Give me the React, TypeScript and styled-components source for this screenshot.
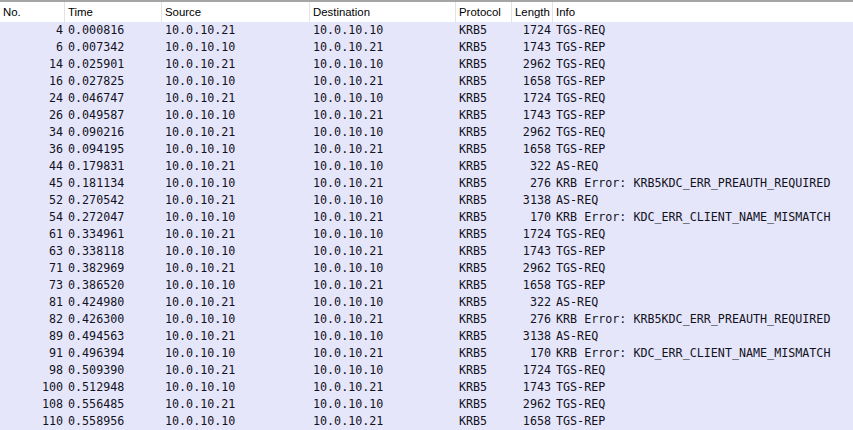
import React from "react";
import styled, { createGlobalStyle } from "styled-components";

const Global = createGlobalStyle`
  html, body { margin: 0; padding: 0; background: #ffffff; }
  body { width: 853px; height: 430px; overflow: hidden; }
`;

const COLS = "65px 97px 148px 146px 56px 41px 1fr";

const Table = styled.div`
  width: 853px;
  height: 430px;
  display: flex;
  flex-direction: column;
  overflow: hidden;
  border-top: 2px solid #a5a5a5;
  box-sizing: border-box;
`;

const Header = styled.div`
  display: grid;
  grid-template-columns: ${COLS};
  height: 21px;
  background: #ffffff;
  font-family: "Liberation Sans", "Noto Sans", sans-serif;
  font-size: 11.4px;
  color: #000;
`;

const HeadCell = styled.div<{ $last?: boolean }>`
  display: flex;
  align-items: center;
  padding-left: 3px;
  border-right: ${(p) => (p.$last ? "none" : "1px solid #e3e3e3")};
  white-space: nowrap;
  overflow: hidden;
`;

const Body = styled.div`
  flex: 1;
  border-left: 1px solid #9a9a9a;
  background: #e6e6fb;
`;

const Row = styled.div`
  display: grid;
  grid-template-columns: ${COLS};
  height: 17px;
  margin-left: -1px;
  background: #e6e6fb;
  font-family: "DejaVu Sans Mono", "Liberation Mono", monospace;
  font-size: 11.7px;
  color: #12121c;
  line-height: 17px;
`;

const Cell = styled.div<{ $right?: boolean; $pad?: number }>`
  white-space: pre;
  overflow: visible;
  text-align: ${(p) => (p.$right ? "right" : "left")};
  padding-left: ${(p) => (p.$right ? 0 : p.$pad ?? 3)}px;
  padding-right: ${(p) => (p.$right ? 2 : 0)}px;
`;

type Pkt = [number, string, string, string, string, number, string];

const A = "10.0.10.21";
const B = "10.0.10.10";
const PRE = "KRB Error: KRB5KDC_ERR_PREAUTH_REQUIRED";
const MIS = "KRB Error: KDC_ERR_CLIENT_NAME_MISMATCH";

const rows: Pkt[] = [
  [4, "0.000816", A, B, "KRB5", 1724, "TGS-REQ"],
  [6, "0.007342", B, A, "KRB5", 1743, "TGS-REP"],
  [14, "0.025901", A, B, "KRB5", 2962, "TGS-REQ"],
  [16, "0.027825", B, A, "KRB5", 1658, "TGS-REP"],
  [24, "0.046747", A, B, "KRB5", 1724, "TGS-REQ"],
  [26, "0.049587", B, A, "KRB5", 1743, "TGS-REP"],
  [34, "0.090216", A, B, "KRB5", 2962, "TGS-REQ"],
  [36, "0.094195", B, A, "KRB5", 1658, "TGS-REP"],
  [44, "0.179831", A, B, "KRB5", 322, "AS-REQ"],
  [45, "0.181134", B, A, "KRB5", 276, PRE],
  [52, "0.270542", A, B, "KRB5", 3138, "AS-REQ"],
  [54, "0.272047", B, A, "KRB5", 170, MIS],
  [61, "0.334961", A, B, "KRB5", 1724, "TGS-REQ"],
  [63, "0.338118", B, A, "KRB5", 1743, "TGS-REP"],
  [71, "0.382969", A, B, "KRB5", 2962, "TGS-REQ"],
  [73, "0.386520", B, A, "KRB5", 1658, "TGS-REP"],
  [81, "0.424980", A, B, "KRB5", 322, "AS-REQ"],
  [82, "0.426300", B, A, "KRB5", 276, PRE],
  [89, "0.494563", A, B, "KRB5", 3138, "AS-REQ"],
  [91, "0.496394", B, A, "KRB5", 170, MIS],
  [98, "0.509390", A, B, "KRB5", 1724, "TGS-REQ"],
  [100, "0.512948", B, A, "KRB5", 1743, "TGS-REP"],
  [108, "0.556485", A, B, "KRB5", 2962, "TGS-REQ"],
  [110, "0.558956", B, A, "KRB5", 1658, "TGS-REP"],
];

const heads = ["No.", "Time", "Source", "Destination", "Protocol", "Length", "Info"];

export default function App() {
  return (
    <>
      <Global />
      <Table>
        <Header>
          {heads.map((h, i) => (
            <HeadCell key={h} $last={i === heads.length - 1}>
              {h}
            </HeadCell>
          ))}
        </Header>
        <Body>
          {rows.map((r) => (
            <Row key={r[0]}>
              <Cell $right>{r[0]}</Cell>
              <Cell>{r[1]}</Cell>
              <Cell>{r[2]}</Cell>
              <Cell>{r[3]}</Cell>
              <Cell>{r[4]}</Cell>
              <Cell $right>{r[5]}</Cell>
              <Cell>{r[6]}</Cell>
            </Row>
          ))}
        </Body>
      </Table>
    </>
  );
}
